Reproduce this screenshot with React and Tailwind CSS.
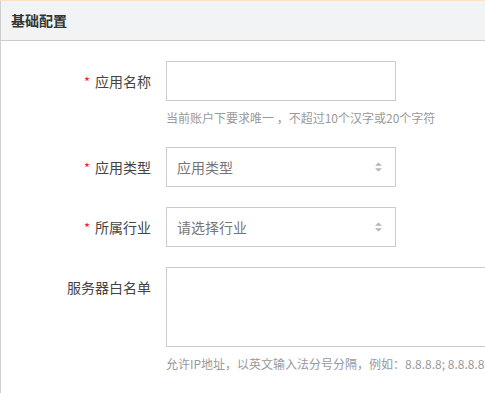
import React from "react";

const font = { fontFamily: '"Noto Sans CJK SC", "Liberation Sans", sans-serif' };

function Label({ required, children }) {
  return (
    <div className="w-[165px] shrink-0 h-10 leading-10 text-right text-[14px] text-[#444] pr-[15px] whitespace-nowrap">
      {required && <span className="text-[#f5222d] mr-[5px] text-[13px]">*</span>}
      {children}
    </div>
  );
}

function Arrows() {
  return (
    <svg width="9" height="10" viewBox="0 0 9 10" className="shrink-0">
      <path d="M4.5 0.5 L8 3.8 L1 3.8 Z" fill="#b5b5b5" />
      <path d="M4.5 9.5 L8 6.2 L1 6.2 Z" fill="#b5b5b5" />
    </svg>
  );
}

export default function App() {
  return (
    <div className="w-[485px] h-[393px] overflow-hidden bg-white" style={font}>
      <div className="h-full border-l border-[#cfcfcf] border-t border-t-[#fde3c6]">
        <div className="h-10 bg-[#f2f3f5] border-b border-[#cccccc] flex items-center pl-[10px] text-[14px] font-semibold text-[#333]">
          基础配置
        </div>
        <div className="pt-5 flex flex-col">
          <div className="flex">
            <Label required>应用名称</Label>
            <div className="flex flex-col">
              <div className="w-[230px] h-10 border border-[#cccccc] bg-white" />
              <div className="mt-2 h-[18px] leading-[18px] text-[12px] text-[#999] whitespace-nowrap">
                当前账户下要求唯一 ，不超过10个汉字或20个字符
              </div>
            </div>
          </div>
          <div className="flex mt-5">
            <Label required>应用类型</Label>
            <div className="w-[230px] h-10 border border-[#cccccc] flex items-center justify-between pl-[10px] pr-[12px] text-[14px] text-[#777]">
              <span>应用类型</span>
              <Arrows />
            </div>
          </div>
          <div className="flex mt-5">
            <Label required>所属行业</Label>
            <div className="w-[230px] h-10 border border-[#cccccc] flex items-center justify-between pl-[10px] pr-[12px] text-[14px] text-[#777]">
              <span>请选择行业</span>
              <Arrows />
            </div>
          </div>
          <div className="flex mt-5">
            <Label>服务器白名单</Label>
            <div className="flex flex-col">
              <div className="w-[420px] h-20 border border-[#cccccc] bg-white" />
              <div className="mt-2 h-[18px] leading-[18px] text-[12px] text-[#999] whitespace-nowrap">
                允许IP地址，以英文输入法分号分隔，例如：8.8.8.8; 8.8.8.8
              </div>
            </div>
          </div>
        </div>
      </div>
    </div>
  );
}
